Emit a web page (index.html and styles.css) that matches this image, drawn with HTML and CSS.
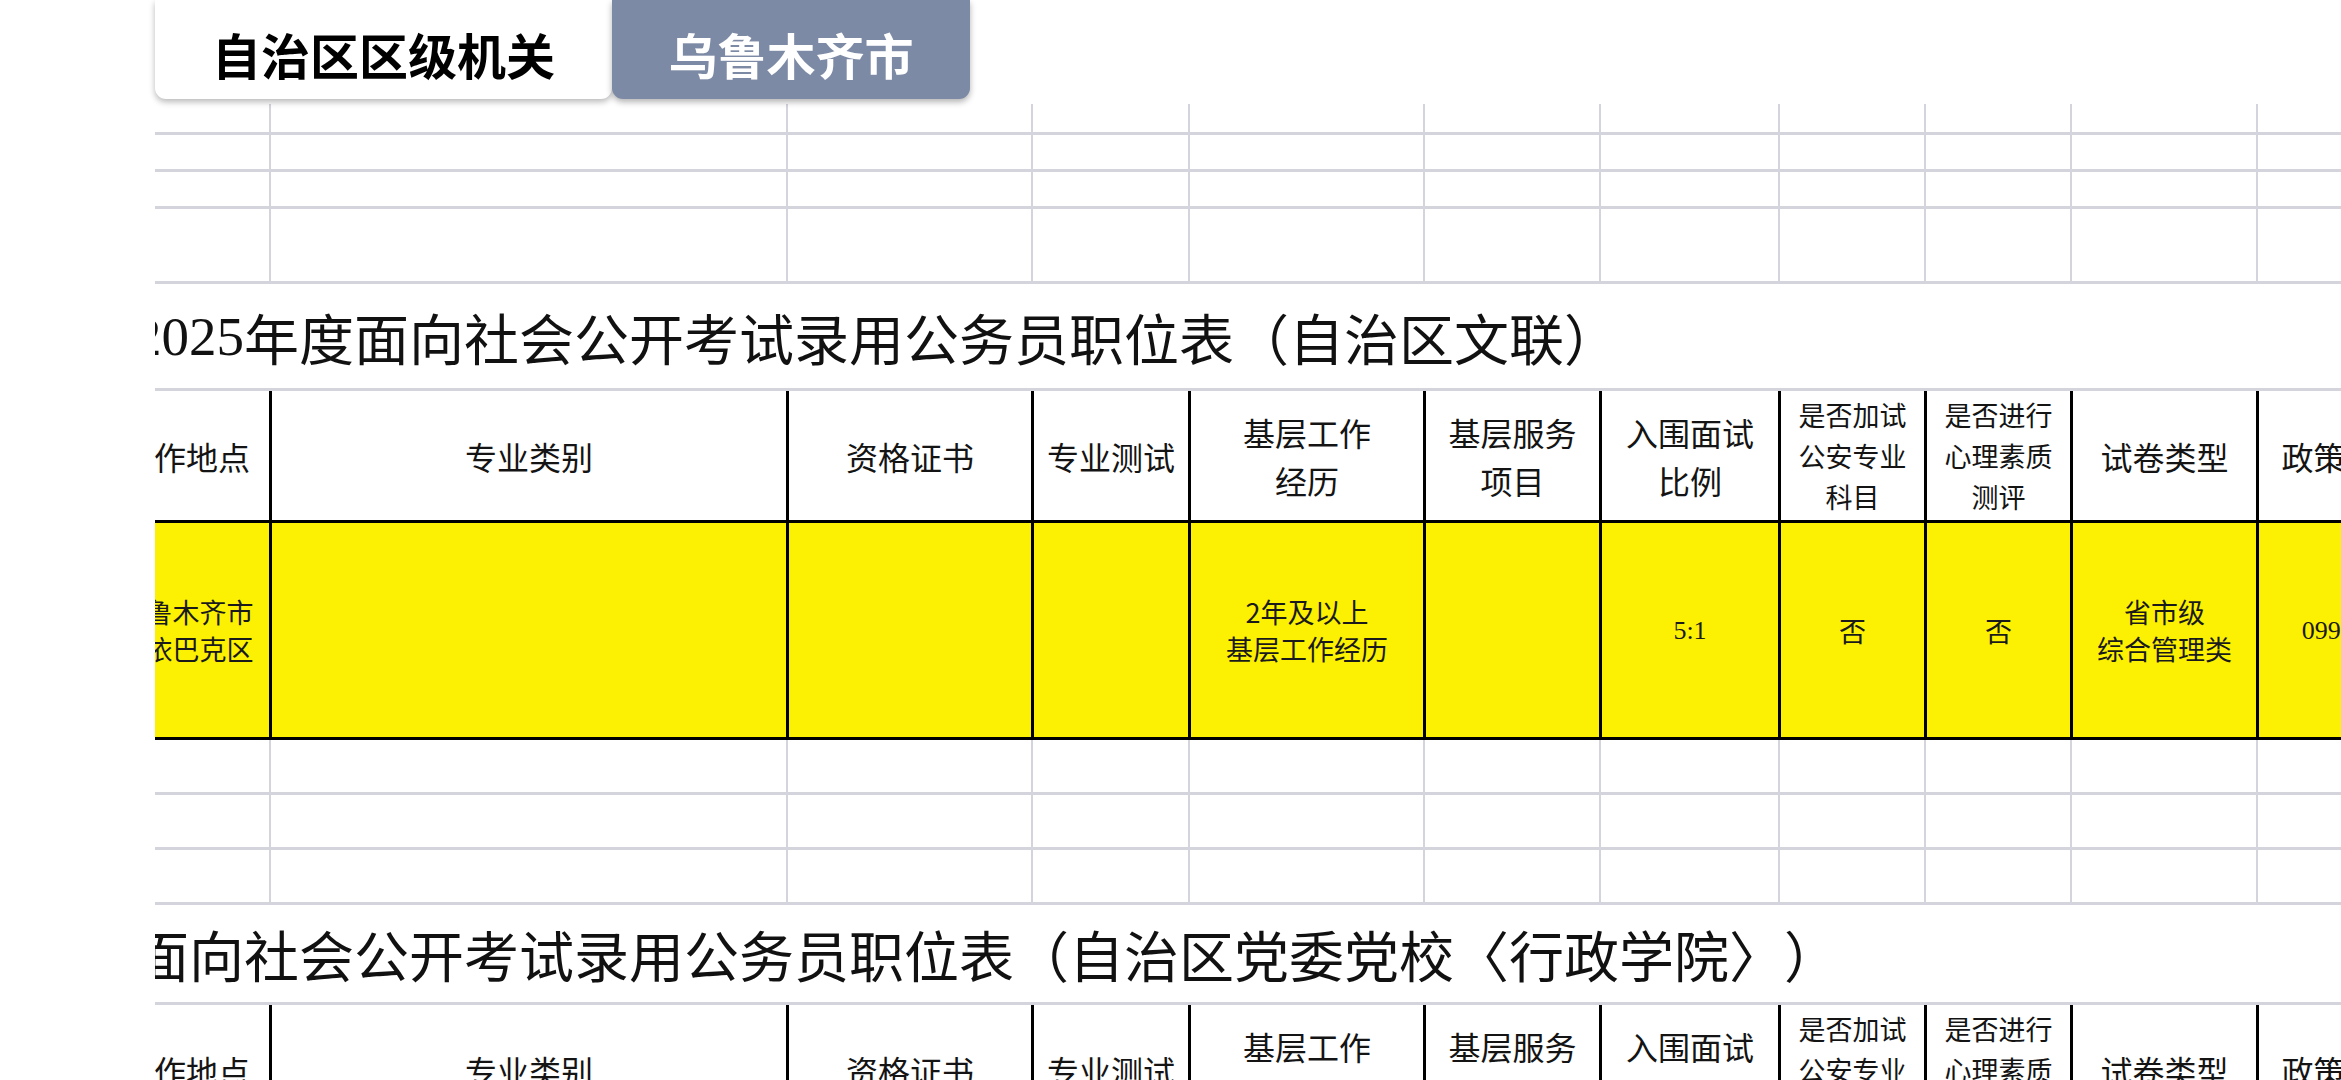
FILE: index.html
```html
<!DOCTYPE html>
<html lang="zh-CN">
<head>
<meta charset="utf-8">
<title>职位表</title>
<link rel="stylesheet" href="styles.css">
</head>
<body>
<div class="tabbar">
  <div class="tab tab-active">自治区区级机关</div>
  <div class="tab tab-other">乌鲁木齐市</div>
</div>
<div class="viewport">
  <div class="sheet">
    <div class="row light h31"><div class="c"></div><div class="c"></div><div class="c"></div><div class="c"></div><div class="c"></div><div class="c"></div><div class="c"></div><div class="c"></div><div class="c"></div><div class="c"></div><div class="c"></div></div>
    <div class="row light h37"><div class="c"></div><div class="c"></div><div class="c"></div><div class="c"></div><div class="c"></div><div class="c"></div><div class="c"></div><div class="c"></div><div class="c"></div><div class="c"></div><div class="c"></div></div>
    <div class="row light h37"><div class="c"></div><div class="c"></div><div class="c"></div><div class="c"></div><div class="c"></div><div class="c"></div><div class="c"></div><div class="c"></div><div class="c"></div><div class="c"></div><div class="c"></div></div>
    <div class="row light h75"><div class="c"></div><div class="c"></div><div class="c"></div><div class="c"></div><div class="c"></div><div class="c"></div><div class="c"></div><div class="c"></div><div class="c"></div><div class="c"></div><div class="c"></div></div>

    <div class="title-row t1"><span class="num">2025</span>年度面向社会公开考试录用公务员职位表（自治区文联）</div>

    <div class="row head">
      <div class="c">工作地点</div>
      <div class="c">专业类别</div>
      <div class="c">资格证书</div>
      <div class="c">专业测试</div>
      <div class="c">基层工作<br>经历</div>
      <div class="c">基层服务<br>项目</div>
      <div class="c">入围面试<br>比例</div>
      <div class="c small">是否加试<br>公安专业<br>科目</div>
      <div class="c small">是否进行<br>心理素质<br>测评</div>
      <div class="c">试卷类型</div>
      <div class="c">政策咨询电话</div>
    </div>
    <div class="row data">
      <div class="c">乌鲁木齐市<br>沙依巴克区</div>
      <div class="c"></div>
      <div class="c"></div>
      <div class="c"></div>
      <div class="c">2年及以上<br>基层工作经历</div>
      <div class="c"></div>
      <div class="c num">5:1</div>
      <div class="c">否</div>
      <div class="c">否</div>
      <div class="c">省市级<br>综合管理类</div>
      <div class="c num">0991-2815530</div>
    </div>

    <div class="row light h55"><div class="c"></div><div class="c"></div><div class="c"></div><div class="c"></div><div class="c"></div><div class="c"></div><div class="c"></div><div class="c"></div><div class="c"></div><div class="c"></div><div class="c"></div></div>
    <div class="row light h55"><div class="c"></div><div class="c"></div><div class="c"></div><div class="c"></div><div class="c"></div><div class="c"></div><div class="c"></div><div class="c"></div><div class="c"></div><div class="c"></div><div class="c"></div></div>
    <div class="row light h55"><div class="c"></div><div class="c"></div><div class="c"></div><div class="c"></div><div class="c"></div><div class="c"></div><div class="c"></div><div class="c"></div><div class="c"></div><div class="c"></div><div class="c"></div></div>

    <div class="title-row t2">面向社会公开考试录用公务员职位表（自治区党委党校〈行政学院〉）</div>

    <div class="row head">
      <div class="c">工作地点</div>
      <div class="c">专业类别</div>
      <div class="c">资格证书</div>
      <div class="c">专业测试</div>
      <div class="c">基层工作<br>经历</div>
      <div class="c">基层服务<br>项目</div>
      <div class="c">入围面试<br>比例</div>
      <div class="c small">是否加试<br>公安专业<br>科目</div>
      <div class="c small">是否进行<br>心理素质<br>测评</div>
      <div class="c">试卷类型</div>
      <div class="c">政策咨询电话</div>
    </div>
  </div>
</div>
</body>
</html>
```

FILE: styles.css
```css
* {
  box-sizing: border-box;
}

html,
body {
  margin: 0;
  padding: 0;
  background: #ffffff;
}

body {
  width: 2341px;
  height: 1080px;
  overflow: hidden;
  font-family: "Noto Sans CJK SC", "Noto Sans", sans-serif;
  color: #111111;
  text-spacing-trim: space-all;
}

/* ---------- tabs ---------- */
.tabbar {
  display: flex;
  align-items: flex-start;
  height: 104px;
  padding-left: 155px;
  position: relative;
  z-index: 2;
}

.tab {
  height: 99px;
  padding-top: 8px;
  display: flex;
  align-items: center;
  justify-content: center;
  font-size: 49px;
  font-weight: 700;
  line-height: 1;
  border-radius: 0 0 11px 11px;
}

.tab-active {
  width: 457px;
  background: #ffffff;
  color: #000000;
  box-shadow: 0 3px 6px rgba(0, 0, 0, 0.28);
}

.tab-other {
  width: 358px;
  background: #7d8aa5;
  color: #ffffff;
  box-shadow: 0 3px 6px rgba(0, 0, 0, 0.3);
}

/* ---------- sheet ---------- */
.viewport {
  margin-left: 155px;
  width: 2186px;
  overflow: hidden;
}

.sheet {
  width: 2393px;
  margin-left: -52px;
}

.row {
  display: grid;
  grid-template-columns: 166px 517px 245px 157px 235px 176px 179px 146px 146px 186px 240px;
}

.c {
  display: flex;
  align-items: center;
  justify-content: center;
  text-align: center;
  white-space: nowrap;
}

.c + .c {
  border-left: 3px solid #000000;
}

.light {
  border-bottom: 3px solid #d4d4dc;
}

.light .c + .c {
  border-left: 2px solid #d4d4dc;
}

.h31 { height: 31px; }
.h37 { height: 37px; }
.h55 { height: 55px; }
.h75 { height: 75px; }

.title-row {
  display: flex;
  align-items: center;
  padding-left: 31px;
  border-bottom: 3px solid #d4d4dc;
  font-size: 55px;
  line-height: 1;
  white-space: nowrap;
  color: #111111;
  text-spacing-trim: space-all;
}

.t1 { height: 107px; }
.t2 { height: 100px; }

.title-row .num {
  font-family: "Liberation Serif", "Times New Roman", serif;
}

.head {
  height: 132px;
  border-bottom: 3px solid #000000;
  font-size: 32px;
  line-height: 48px;
  color: #141414;
}

.head .small {
  font-size: 27px;
  line-height: 41px;
}

.data {
  height: 217px;
  background: #fcf103;
  border-bottom: 3px solid #000000;
  font-size: 27px;
  line-height: 37px;
  color: #1a1a1a;
}

.data .num {
  font-family: "Liberation Serif", "Times New Roman", serif;
  font-size: 26px;
}
```
